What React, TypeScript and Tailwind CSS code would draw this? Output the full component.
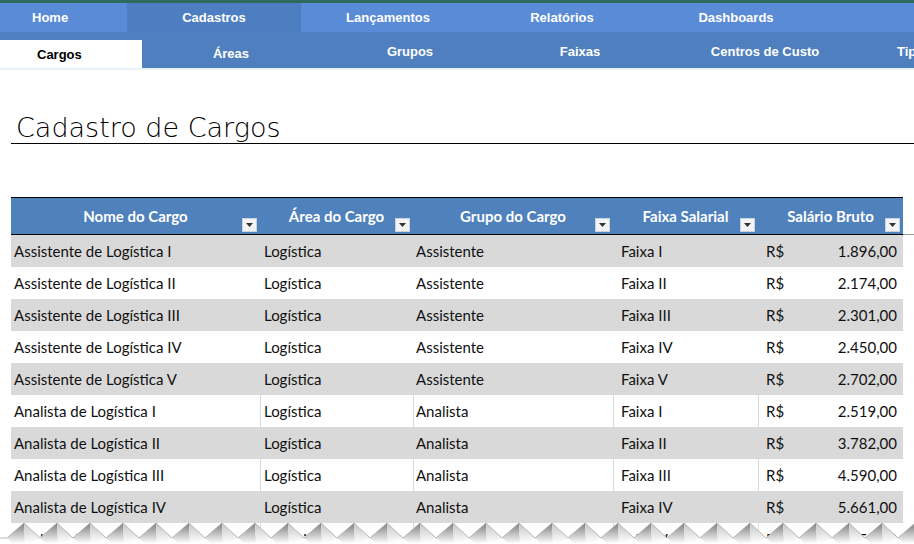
const topMenu = [
  { label: "Cadastros", active: true },
  { label: "Lançamentos" },
  { label: "Relatórios" },
  { label: "Dashboards" },
];

const subMenu = [
  { label: "Áreas", w: "w-[178px]", cls: "pt-[8px]" },
  { label: "Grupos", w: "w-[180px]", cls: "pt-[3px]" },
  { label: "Faixas", w: "w-[160px]", cls: "pt-[3px]" },
  { label: "Centros de Custo", w: "w-[210px]", cls: "pt-[4px]" },
];

const columns = ["Nome do Cargo", "Área do Cargo", "Grupo do Cargo", "Faixa Salarial", "Salário Bruto"];

const roman = ["I", "II", "III", "IV", "V"];
const assist = ["1.896,00", "2.174,00", "2.301,00", "2.450,00", "2.702,00"];
const analista = ["2.519,00", "3.782,00", "4.590,00", "5.661,00", "6.750,00"];

const rows = [
  ...roman.map((r, i) => ({ nome: `Assistente de Logística ${r}`, grupo: "Assistente", faixa: `Faixa ${r}`, valor: assist[i] })),
  ...roman.map((r, i) => ({ nome: `Analista de Logística ${r}`, grupo: "Analista", faixa: `Faixa ${r}`, valor: analista[i] })),
];

const grid = "grid grid-cols-[249px_153px_200px_145px_145px]";

function FilterButton() {
  return (
    <span className="absolute bottom-[2px] right-[3px] flex h-[14px] w-[15px] items-center justify-center border border-[#c9d3e0] bg-[#f4f4f4]">
      <svg width="7" height="4" viewBox="0 0 7 4">
        <path d="M0 0 H7 L3.5 4 Z" fill="#333" />
      </svg>
    </span>
  );
}

// jagged "torn paper" edge over the last row
function TornEdge() {
  const peaks: number[] = [];
  for (let x = 24; x < 940; x += 33) peaks.push(x);
  const zig = peaks.map((x) => `${x - 17},18 ${x},3 ${x + 16},18`).join(" ");
  return (
    <svg className="absolute bottom-0 left-0" width="914" height="24" viewBox="0 0 914 24">
      <defs>
        <linearGradient id="shadeL" x1="0" y1="0" x2="0" y2="1">
          <stop offset="0" stopColor="#7d7d7d" />
          <stop offset="0.8" stopColor="#e6e6e6" />
          <stop offset="1" stopColor="#ffffff" />
        </linearGradient>
        <linearGradient id="shadeR" x1="0" y1="0" x2="0" y2="1">
          <stop offset="0" stopColor="#c4c4c4" />
          <stop offset="1" stopColor="#ffffff" />
        </linearGradient>
      </defs>
      <polygon points={`0,24 0,18 ${zig} 914,18 914,24`} fill="#fff" />
      {peaks.map((x) => (
        <g key={x}>
          <polygon points={`${x - 17},18 ${x},3 ${x + 1},22 ${x - 10},24`} fill="url(#shadeL)" />
          <polygon points={`${x},3 ${x + 16},18 ${x + 6},23 ${x + 1},22`} fill="url(#shadeR)" />
        </g>
      ))}
      <polyline points={`0,18 ${zig}`} fill="none" stroke="#a8a8a8" strokeWidth="0.8" />
    </svg>
  );
}

export default function App() {
  return (
    <div className="relative h-[544px] w-[914px] overflow-hidden bg-white">
      <div className="h-[3px] bg-[#2f6a5f]" />
      <nav className="flex h-[29px] bg-[#5a8bd6] font-['Liberation_Sans',sans-serif] text-[13px] font-bold text-white">
        <div className="flex w-[127px] shrink-0 items-center pl-[32px]">Home</div>
        {topMenu.map((m) => (
          <div
            key={m.label}
            className={`flex w-[174px] shrink-0 items-center justify-center ${m.active ? "bg-[#4e7ec2]" : ""}`}
          >
            {m.label}
          </div>
        ))}
      </nav>
      <div className="flex h-[36px] items-end overflow-hidden whitespace-nowrap bg-[#4f7fbe] font-['Liberation_Sans',sans-serif] text-[13px] font-bold text-white">
        <div className="flex h-[28px] w-[142px] shrink-0 items-center bg-white pl-[37px] pt-[2px] text-black">Cargos</div>
        {subMenu.map((m) => (
          <div key={m.label} className={`flex h-[36px] shrink-0 ${m.w} items-center justify-center ${m.cls}`}>
            {m.label}
          </div>
        ))}
        <div className="flex h-[36px] shrink-0 items-center pl-[27px] pt-[4px]">Tipos</div>
      </div>
      <div className="h-[2px] bg-[#eaf2fa]" />

      <div className="ml-[11px] mt-[42px] h-[32px] border-b border-black pl-[5px] font-['DejaVu_Sans',sans-serif] text-[27px] font-extralight leading-[32px] text-black">
        Cadastro de Cargos
      </div>

      <div className="relative ml-[11px] mt-[53px] w-[892px] font-['Lato',sans-serif]">
        <div className={`${grid} h-[38px] border-y border-black bg-[#4f81bd] text-[15px] font-bold text-white`}>
          {columns.map((c) => (
            <div key={c} className="relative flex items-center justify-center">
              {c}
              <FilterButton />
            </div>
          ))}
        </div>
        <div className="absolute right-[-11px] top-[37px] h-px w-[11px] bg-[#9a9a9a]" />
        {rows.map((r, i) => {
          const gray = i % 2 === 0;
          const lines = !gray && i >= 5;
          const cell = `flex items-center ${lines ? "border-l border-[#d9d9d9]" : "border-l border-transparent"}`;
          return (
            <div key={r.nome} className={`${grid} h-[32px] text-[15px] text-[#111] ${gray ? "bg-[#d9d9d9]" : "bg-white"}`}>
              <div className="flex items-center pl-[3px]">{r.nome}</div>
              <div className={`${cell} pl-[3px]`}>Logística</div>
              <div className={`${cell} pl-[2px]`}>{r.grupo}</div>
              <div className={`${cell} pl-[7px]`}>{r.faixa}</div>
              <div className={`${cell} justify-between pl-[7px] pr-[6px]`}>
                <span>R$</span>
                <span>{r.valor}</span>
              </div>
            </div>
          );
        })}
      </div>

      <TornEdge />
    </div>
  );
}
